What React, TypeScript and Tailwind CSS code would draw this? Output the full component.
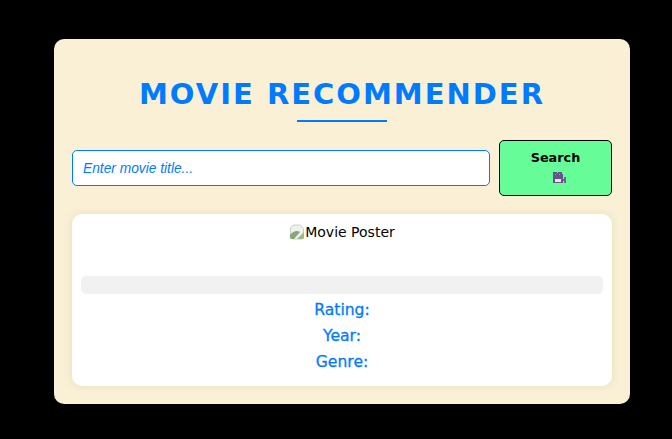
export default function App() {
  return (
    <div className="min-h-screen bg-black pl-[54px] pt-[39px] font-['DejaVu_Sans',sans-serif]">
      <div className="flex h-[365px] w-[576px] flex-col rounded-[10px] bg-[#f9f0d6] px-[18px] pt-[35px]">
        <h1 className="text-center text-[29px] leading-[40px] font-bold tracking-[2px] text-[#007bff]">
          MOVIE RECOMMENDER
        </h1>
        <div className="mx-auto mt-[6px] h-[2px] w-[90px] bg-[#007bff]" />
        <div className="mt-[18px] flex items-center gap-[9px]">
          <input
            placeholder="Enter movie title..."
            className="h-[36px] w-[418px] rounded-[5px] border border-[#007bff] bg-white px-[10px] font-['Liberation_Sans',sans-serif] text-[13.75px] italic outline-none placeholder:text-[#007bff]"
          />
          <button className="flex h-[56px] w-[113px] flex-col items-center rounded-[5px] border border-black bg-[#66fc98] pt-[9px] text-[12.8px] leading-[16px] font-bold text-black">
            Search
            <svg width="14" height="13" viewBox="0 0 14 13" className="mt-[5px] ml-[9px]">
              <path d="M0 1h4v1h1V1h4v2h1v9H0z" fill="#62558f" />
              <path d="M2 8h6v3H2z" fill="#efe6d6" />
              <path d="M10 8h1V6h2v6h-2v-2h-1z" fill="#6d6199" />
              <path d="M2 3h1v1H2zM6 3h1v1H6z" fill="#a59bc6" />
            </svg>
          </button>
        </div>
        <div className="mt-[18px] flex h-[172px] flex-col items-center rounded-[10px] bg-white px-[9px] shadow-[0_0_8px_rgba(120,90,0,0.12)]">
          <div className="mt-[9px] flex h-[18px] items-center text-[14px] text-black">
            <svg width="16" height="16" viewBox="0 0 16 16">
              <path d="M1.5 5c0-2 2-4 4-4h5.5l3.500 3.500V13c0 1-1 2-2 2H4c-1 0-2.500-1-2.500-2z" fill="#eef1ec" stroke="#c9cfc6" />
              <path d="M1 14v-3c3-4 7-5 10-3l-6 7H2z" fill="#86a876" />
              <path d="M8 15l7-7v6l-1 1z" fill="#9cb98d" />
            </svg>
            Movie Poster
          </div>
          <div className="mt-[35px] h-[18px] w-full rounded-[5px] bg-[#f1f1f1]" />
          <div className="mt-[7px] flex flex-col items-center gap-[8px] text-[15.6px] leading-[18px] text-[#007bff] [-webkit-text-stroke:0.3px_#007bff]">
            <p>Rating:</p>
            <p>Year:</p>
            <p>Genre:</p>
          </div>
        </div>
      </div>
    </div>
  );
}
